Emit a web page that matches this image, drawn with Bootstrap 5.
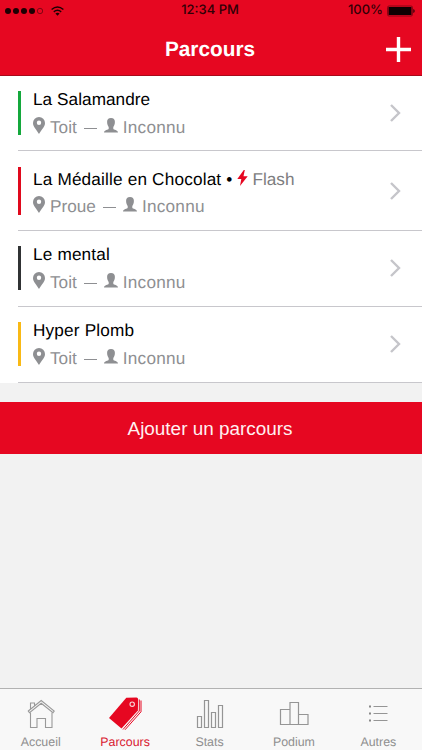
<!DOCTYPE html>
<html lang="fr">
<head>
<meta charset="utf-8">
<meta name="viewport" content="width=device-width, initial-scale=1">
<title>Parcours</title>
<link href="https://cdn.jsdelivr.net/npm/bootstrap@5.3.0/dist/css/bootstrap.min.css" rel="stylesheet">
<style>
body{font-family:"Liberation Sans",Arial,sans-serif;background:#f2f2f2;color:#000;text-rendering:geometricPrecision;height:750px;overflow:hidden}
svg{display:block;flex:none}
.app-head{background:#e60721;height:76px;border-bottom:1px solid #a80a1b}
.status{height:21px;font:500 13px/21px Inter,sans-serif;color:#300006;padding:0 7px 0 5px}
.title-row{height:54px;padding:2px 11px 0 9px}
.title-row h1{font-size:20.8px;line-height:52px;font-weight:700;padding-top:2px}
.side{width:90px}
.route{height:76px;padding-left:18px}
.route.first{height:75px}
.route.tall{height:80px}
.route-in{border-bottom:1px solid #c8c7cc;padding:15px 0 0}
.tall .route-in{padding-top:16px}
.bar{width:3px;height:44px}
.tall .bar{height:48px}
.green{background:#14a83c}.red{background:#e0091d}.dark{background:#303234}.yellow{background:#f9b915}
.label-col{padding-left:12px}
.name{font-size:17.2px;line-height:20px;letter-spacing:.17px;height:28px;margin-top:-2px;white-space:nowrap}
.first .name{letter-spacing:.05px}
.tall .name{margin-top:2px;height:27px}
.bolt{margin:1px 0 0 5px}
.sub{font-size:17.2px;line-height:20px;color:#8e8f92;white-space:nowrap;height:20px}
.pin-ico{margin-top:-4px}
.man-ico{margin:-4px 5px 0 7px}
.man-ico + span{letter-spacing:.25px}
.place{margin-left:5px}
.dash{width:13px;height:1px;background:#8e8f92;margin:2px 0 0 7px}
.flash{color:#7d7d80;letter-spacing:0}
.chev{padding:0 21px 16px 0}
.add{background:#e60721;color:#fff0f1;height:52px;margin-top:19px;font-size:18.9px;padding:8px 14px 6px 12px}
.add:hover{background:#e60721;color:#fff0f1}
.tabs{height:62px;background:#f8f8f8;border-top:1px solid #b2b2b2;font-size:12.4px;line-height:14px;color:#8f8f8f}
.tab{width:84.5px;padding:7px 3px 0 0;color:inherit}
.tab svg{margin-bottom:5px}
.tab.on{color:#d92032}
</style>
<script src="https://cdn.jsdelivr.net/npm/bootstrap@5.3.0/dist/js/bootstrap.bundle.min.js"></script>
</head>
<body class="d-flex flex-column">
<svg width="0" height="0" class="position-absolute" aria-hidden="true">
<symbol id="pin" viewBox="0 0 12 17"><path fill="#8e8f92" fill-rule="evenodd" d="M6 0a6 6 0 0 1 6 6C12 10 8.500 12.500 6 17 3.500 12.500 0 10 0 6a6 6 0 0 1 6-6ZM6 3.600a2.200 2.200 0 1 0 0 4.400 2.200 2.200 0 0 0 0-4.400Z"/></symbol>
<symbol id="man" viewBox="0 0 14 15"><path fill="#8e8f92" d="M7 0c2.700 0 3.900 1.400 3.900 3.700 0 2.400-.7 3.800-1.600 5.300v1.700c.4 1.400 4.400.9 4.700 3.800H0c.3-2.900 4.300-2.400 4.700-3.800V9c-.9-1.500-1.600-2.900-1.600-5.300C3.100 1.400 4.300 0 7 0Z"/></symbol>
<symbol id="chevron" viewBox="0 0 11 18"><path fill="none" stroke="#c5c5ca" stroke-width="2.400" d="M1 1l8 8-8 8"/></symbol>
</svg>
<header class="app-head">
  <div class="status d-flex align-items-center justify-content-between">
    <div class="side d-flex align-items-center">
      <svg width="38" height="8" viewBox="0 0 38 8"><g fill="#1c0003"><circle cx="3" cy="4" r="3"/><circle cx="11" cy="4" r="3"/><circle cx="19" cy="4" r="3"/><circle cx="27" cy="4" r="3"/></g><circle cx="35" cy="4" r="2.700" fill="none" stroke="#6a0510" stroke-width=".8"/></svg>
      <svg class="ms-2" width="13" height="10" viewBox="0 0 13 10" fill="none" stroke="#1c0003" stroke-width="1.400"><path d="M.6 3.500Q6.500-1.700 12.400 3.500M2.800 5.900q3.700-3.200 7.400 0"/><path fill="#1c0003" stroke="none" d="M4.400 7.500q2.100-1.700 4.200 0L6.500 9.700z"/></svg>
    </div>
    <span>12:34 PM</span>
    <div class="side d-flex align-items-center justify-content-end"><span>100%</span>
      <svg class="ms-1" width="28" height="12" viewBox="0 0 28 12"><rect x=".5" y="1" width="25" height="10" rx="1.500" fill="none" stroke="#730411" stroke-width=".8"/><rect x="1.500" y="2" width="23" height="8" fill="#100002"/><path fill="#300006" d="M26.300 4q1.400.4 1.400 2t-1.400 2z"/></svg>
    </div>
  </div>
  <div class="title-row d-flex align-items-center justify-content-between">
    <div class="side"></div><h1 class="m-0 text-white">Parcours</h1>
    <div class="side d-flex justify-content-end"><svg width="25" height="25" viewBox="0 0 25 25"><path stroke="#fff" stroke-width="3.400" d="M12.500 0v25M0 12.500h25"/></svg></div>
  </div>
</header>
<main class="flex-grow-1">
  <div class="bg-white">
    <div class="route first"><div class="route-in d-flex h-100"><div class="bar green"></div><div class="label-col flex-grow-1"><div class="name">La Salamandre</div><div class="sub d-flex align-items-center"><svg class="pin-ico" width="12" height="17"><use href="#pin"/></svg><span class="place">Toit</span><span class="dash"></span><svg class="man-ico" width="14" height="15"><use href="#man"/></svg><span>Inconnu</span></div></div><div class="chev d-flex align-items-center"><svg width="11" height="18"><use href="#chevron"/></svg></div></div></div>
    <div class="route tall"><div class="route-in d-flex h-100"><div class="bar red"></div><div class="label-col flex-grow-1"><div class="name d-flex"><span>La Médaille en Chocolat •</span><svg class="bolt" width="11" height="16" viewBox="0 0 11 16"><path fill="#e60721" d="M6.800 0 .3 9h4L3 16l7.700-9.700H6.500L7.800 0z"/></svg><span class="flash ms-1">Flash</span></div><div class="sub d-flex align-items-center"><svg class="pin-ico" width="12" height="17"><use href="#pin"/></svg><span class="place">Proue</span><span class="dash"></span><svg class="man-ico" width="14" height="15"><use href="#man"/></svg><span>Inconnu</span></div></div><div class="chev d-flex align-items-center"><svg width="11" height="18"><use href="#chevron"/></svg></div></div></div>
    <div class="route"><div class="route-in d-flex h-100"><div class="bar dark"></div><div class="label-col flex-grow-1"><div class="name">Le mental</div><div class="sub d-flex align-items-center"><svg class="pin-ico" width="12" height="17"><use href="#pin"/></svg><span class="place">Toit</span><span class="dash"></span><svg class="man-ico" width="14" height="15"><use href="#man"/></svg><span>Inconnu</span></div></div><div class="chev d-flex align-items-center"><svg width="11" height="18"><use href="#chevron"/></svg></div></div></div>
    <div class="route"><div class="route-in d-flex h-100"><div class="bar yellow"></div><div class="label-col flex-grow-1"><div class="name">Hyper Plomb</div><div class="sub d-flex align-items-center"><svg class="pin-ico" width="12" height="17"><use href="#pin"/></svg><span class="place">Toit</span><span class="dash"></span><svg class="man-ico" width="14" height="15"><use href="#man"/></svg><span>Inconnu</span></div></div><div class="chev d-flex align-items-center"><svg width="11" height="18"><use href="#chevron"/></svg></div></div></div>
  </div>
  <button class="add btn rounded-0 border-0 w-100 d-flex align-items-center justify-content-center">Ajouter un parcours</button>
</main>
<nav class="tabs d-flex" aria-label="Navigation">
  <a class="tab d-flex flex-column align-items-center text-decoration-none" href="#"><svg width="36" height="34" viewBox="0 -1 36 34" fill="none" stroke="#999" stroke-width="1.100"><path d="M7.500 15.500V30.500h6.500V21.500h8.500v9h6.500V15.500"/><path d="M5.300 14 18.200 3.500l13 10.500-1.200 1.700L18.200 6.300 6.500 15.700zM7.500 12V6h4v3"/></svg>Accueil</a>
  <a class="tab on d-flex flex-column align-items-center text-decoration-none" href="#"><svg width="34" height="34" viewBox="0 -.5 34 34"><path fill="#e60721" d="M18.300 1.300 28.500 1q1.500 0 1.600 1.500l-.2 11.500L13.500 32 1 21.500z"/><circle cx="24.200" cy="7.700" r="2.200" fill="none" stroke="#f7d5d8" stroke-width="1.100"/><path fill="none" stroke="#e60721" stroke-width="1" d="M31.300 3v11.500L15 33M33 4v11.300L17 33.300"/></svg>Parcours</a>
  <a class="tab d-flex flex-column align-items-center text-decoration-none" href="#"><svg width="28" height="34" viewBox="0 -1 28 34" fill="none" stroke="#959595" stroke-width="1.200"><path d="M1.500 19.500h4v11h-4zM8.500 3.500h4v27h-4zM15.500 15.500h4v15h-4zM22.500 8.500h4v22h-4z"/></svg>Stats</a>
  <a class="tab d-flex flex-column align-items-center text-decoration-none" href="#"><svg width="30" height="34" viewBox="0 0 30 34" fill="none" stroke="#959595" stroke-width="1.200"><path d="M1.500 13.500h9.500v15H1.500zM11 6.500h8.500v22H11zM19.500 18.500H29v10h-9.500z"/></svg>Podium</a>
  <a class="tab d-flex flex-column align-items-center text-decoration-none" href="#"><svg width="20" height="34" viewBox="0 0 20 34"><path stroke="#959595" stroke-width="1.200" d="M5.500 10.500H19.500M5.500 17.500H19.500M5.500 24.500H19.500"/><path fill="#888" d="M1 9.500h2v2H1zM1 16.500h2v2H1zM1 23.500h2v2H1z"/></svg>Autres</a>
</nav>
</body>
</html>
